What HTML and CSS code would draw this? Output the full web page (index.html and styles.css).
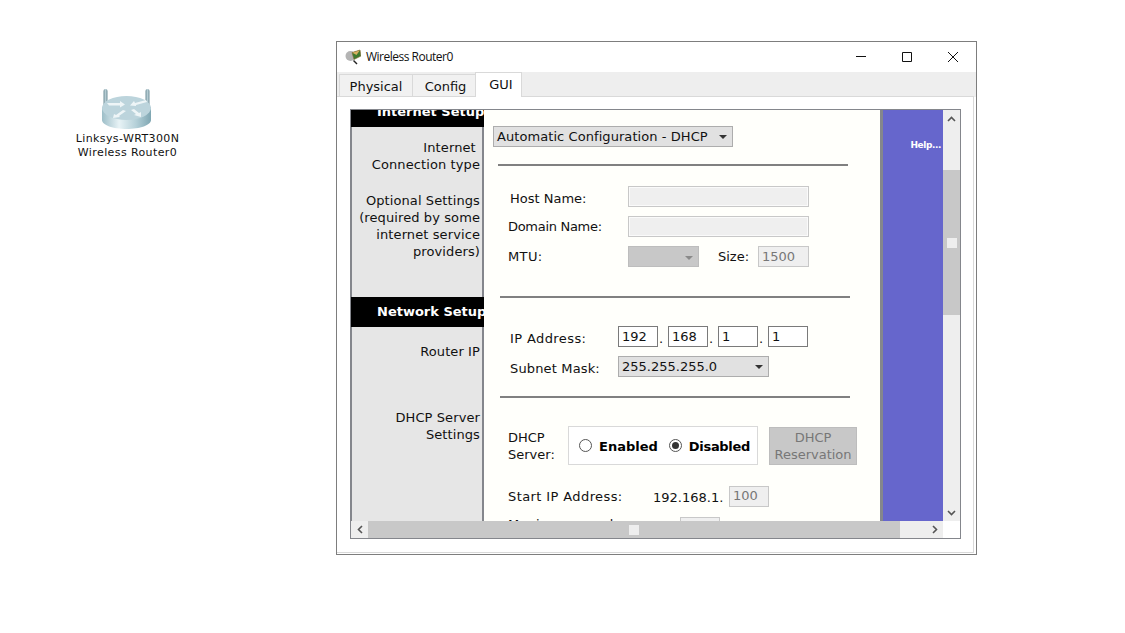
FILE: index.html
```html
<!DOCTYPE html>
<html lang="en">
<head>
<meta charset="utf-8">
<title>Wireless Router0</title>
<link rel="stylesheet" href="styles.css">
</head>
<body>
<main class="desktop">
  <div class="device">
    <svg class="device-icon" width="50" height="44" viewBox="0 0 50 44">
      <defs>
        <linearGradient id="body" x1="0" x2="1" y1="0" y2="0">
          <stop offset="0" stop-color="#9dbec8"/><stop offset=".35" stop-color="#e8f3f6"/><stop offset=".7" stop-color="#b4d0d8"/><stop offset="1" stop-color="#7fa6b2"/>
        </linearGradient>
        <linearGradient id="ant" x1="0" x2="1" y1="0" y2="0">
          <stop offset="0" stop-color="#6f8f99"/><stop offset=".5" stop-color="#b5cbd2"/><stop offset="1" stop-color="#6f8f99"/>
        </linearGradient>
      </defs>
      <rect x="2.500" y="2" width="4" height="22" rx="2" fill="url(#ant)"/>
      <rect x="44.500" y="2" width="4" height="22" rx="2" fill="url(#ant)"/>
      <path d="M1 20v13c0 5 11 9 24.500 9S50 38 50 33V20z" fill="url(#body)"/>
      <ellipse cx="25.500" cy="21" rx="24.500" ry="12" fill="#bcd4dc"/>
      <path d="M6 16l13 0 0-2 5 3.500-5 3 0-2-11 0zM45 13l-11 3-1-2-4 4.500 6 .5 0-1 11-3zM22 23l-7 5-2-1-1 4 7-1-1-1 7-5zM30 23l5 4-2 1 7 2 0-5-2 1-5-4z" fill="#eef5f7"/>
    </svg>
    <div class="device-label">Linksys-WRT300N<br>Wireless Router0</div>
  </div>

  <section class="window">
    <header class="titlebar">
      <svg class="app-icon" width="16" height="16" viewBox="0 0 16 16">
        <circle cx="5.500" cy="7" r="5" fill="#b4b4b4"/>
        <path d="M7 3.500l8-2.500 1 6-7 3.500z" fill="#3f7a2e"/>
        <path d="M7 3.500l8-2.500-3.500 5z" fill="#d9b060"/>
        <path d="M7 3.500l8-2.500 1 6-7 3.500z" fill="none" stroke="#8a6a34" stroke-width=".6"/>
        <path d="M8.500 11.500l3.500 3.500" stroke="#222" stroke-width="1.400"/>
      </svg>
      <span class="title">Wireless Router0</span>
      <div class="controls">
        <svg width="12" height="12" viewBox="0 0 12 12"><path d="M1 5.500h10" stroke="#111" fill="none"/></svg>
        <svg width="12" height="12" viewBox="0 0 12 12"><path d="M1.500 1.500h9v9h-9z" stroke="#111" fill="none"/></svg>
        <svg width="12" height="12" viewBox="0 0 12 12"><path d="M1 1l10 10M11 1L1 11" stroke="#111" fill="none"/></svg>
      </div>
    </header>
    <nav class="tabs">
      <span class="tab tab-physical">Physical</span>
      <span class="tab tab-config">Config</span>
      <span class="tab tab-active">GUI</span>
    </nav>
    <div class="panel">
      <div class="frame">
        <div class="view">
          <div class="page">
            <aside class="side">
              <div class="side-head">Internet Setup</div>
              <p class="side-text side-conn">Internet&nbsp;<br>Connection type</p>
              <p class="side-text side-opt">Optional Settings<br>(required by some<br>internet service<br>providers)</p>
              <div class="side-head side-net">Network Setup</div>
              <p class="side-text side-router">Router IP</p>
              <p class="side-text side-dhcp">DHCP Server<br>Settings</p>
            </aside>
            <div class="content">
              <div class="select select-conn">Automatic Configuration - DHCP<i class="caret"></i></div>
              <hr class="rule rule-1">
              <div class="row row-host"><label class="lab lab-host">Host Name:</label><span class="field field-wide"></span></div>
              <div class="row row-domain"><label class="lab lab-domain">Domain Name:</label><span class="field field-wide"></span></div>
              <div class="row row-mtu"><label class="lab lab-mtu">MTU:</label><span class="select-off"><i class="caret caret-off"></i></span><label class="lab-size">Size:</label><span class="field field-size">1500</span></div>
              <hr class="rule rule-2">
              <div class="row row-ip"><label class="lab lab-ip">IP Address:</label><span class="octet">192</span><b class="dot">.</b><span class="octet">168</span><b class="dot">.</b><span class="octet">1</span><b class="dot">.</b><span class="octet">1</span></div>
              <div class="row row-mask"><label class="lab lab-mask">Subnet Mask:</label><div class="select select-mask">255.255.255.0<i class="caret"></i></div></div>
              <hr class="rule rule-3">
              <div class="row row-dhcp">
                <label class="lab-dhcp">DHCP<br>Server:</label>
                <div class="radio-box">
                  <span class="radio"></span><strong class="radio-text">Enabled</strong>
                  <span class="radio radio-on"></span><strong class="radio-text radio-text-tight">Disabled</strong>
                </div>
                <div class="btn-off">DHCP<br>Reservation</div>
              </div>
              <div class="row row-start"><label class="lab lab-start">Start IP Address:</label><span class="prefix">192.168.1.</span><span class="field field-start">100</span></div>
              <div class="row row-max"><label class="lab lab-max">Maximum number</label><span class="field field-max"></span></div>
            </div>
            <div class="help"><span class="help-text">Help...</span></div>
          </div>
          <div class="vbar">
            <svg class="arrow" width="9" height="6" viewBox="0 0 9 6"><path d="M1 5l3.500-3.500L8 5" stroke="#555" stroke-width="1.600" fill="none"/></svg>
            <div class="vthumb"><i class="grip"></i></div>
            <svg class="arrow arrow-down" width="9" height="6" viewBox="0 0 9 6"><path d="M1 1l3.500 3.500L8 1" stroke="#555" stroke-width="1.600" fill="none"/></svg>
          </div>
        </div>
        <div class="hbar">
          <div class="hbtn"><svg width="6" height="9" viewBox="0 0 6 9"><path d="M5 1L1.500 4.500 5 8" stroke="#555" stroke-width="1.600" fill="none"/></svg></div>
          <div class="hthumb"><i class="grip"></i></div>
          <div class="htrack"><svg width="6" height="9" viewBox="0 0 6 9"><path d="M1 1l3.500 3.500L1 8" stroke="#555" stroke-width="1.600" fill="none"/></svg></div>
          <div class="corner"></div>
        </div>
      </div>
    </div>
  </section>
</main>
</body>
</html>
```

FILE: styles.css
```css
* { box-sizing: border-box; }
html, body { margin: 0; padding: 0; background: #fff; }
body { font: 13px/17px "DejaVu Sans", Verdana, sans-serif; color: #111; }
.desktop { position: relative; width: 1125px; height: 633px; overflow: hidden; background: #fff; }

.device { position: absolute; left: 62px; top: 87px; width: 131px; text-align: center; }
.device-icon { display: block; margin: 0 0 0 39px; height: 44px; width: 50px; }
.device-label { font-size: 11px; line-height: 14px; letter-spacing: .4px; margin-top: 1px; }

.window { position: absolute; left: 336px; top: 41px; width: 641px; height: 514px; border: 1px solid #7d7d7d; background: #fff; display: flex; flex-direction: column; }
.titlebar { height: 30px; display: flex; align-items: center; padding-left: 8px; flex: none; }
.app-icon { margin-right: 5px; }
.title { font: 12px/16px "Open Sans", "Noto Sans", sans-serif; letter-spacing: -.5px; color: #111; }
.controls { margin-left: auto; display: flex; gap: 34px; padding-right: 17px; margin-top: -1px; }
.controls svg { display: block; }

.tabs { height: 25px; background: #eee; flex: none; display: flex; align-items: flex-end; padding-left: 2px; }
.tab { display: block; height: 23px; line-height: 23px; text-align: center; background: #f1f1f1; border: 1px solid #d9d9d9; border-bottom: 0; }
.tab-physical { width: 74px; }
.tab-config { width: 63px; border-left: 0; padding-left: 3px; }
.tab-active { width: 47px; height: 25px; line-height: 24px; background: #fff; margin-left: -1px; padding-left: 5px; position: relative; z-index: 1; }

.panel { flex: 1; min-height: 0; border: 1px solid #d9d9d9; margin: -1px 2px 1px 0; padding: 12px 12px 14px 13px; border-left: 0; }
.frame { width: 611px; height: 430px; border: 1px solid #84868c; display: flex; flex-direction: column; }
.view { flex: 1; min-height: 0; display: flex; overflow: hidden; }
.page { flex: 1; display: flex; overflow: hidden; height: 411px; }

.side { width: 133px; flex: none; background: #e6e6e6; border-left: 1px solid #84868c; border-right: 2px solid #84868c; margin-top: -13px; text-align: right; height: 600px; }
.side-head { height: 30px; margin-left: -1px; margin-right: -2px; background: #000; color: #fff; font-weight: 700; line-height: 30px; padding-left: 26px; text-align: left; white-space: nowrap; }
.side-text { margin: 0; padding-right: 2px; letter-spacing: .1px; }
.side-conn { margin-top: 12px; }
.side-opt { margin-top: 19px; }
.side-net { margin-top: 37px; }
.side-router { margin-top: 16px; }
.side-dhcp { margin-top: 49px; }

.content { width: 399px; flex: none; background: #fffffb; border-right: 3px solid #84868c; height: 411px; overflow: hidden; padding-top: 16px; }
.select { height: 21px; background: #e1e1e1; border: 1px solid #adadad; line-height: 19px; padding-left: 3px; position: relative; white-space: nowrap; }
.select-conn { width: 240px; margin-left: 9px; letter-spacing: .07px; }
.select-mask { width: 151px; }
.caret { position: absolute; right: 5px; top: 8px; width: 0; height: 0; border: 4px solid transparent; border-top-color: #333; border-bottom: 0; }
.caret-off { border-top-color: #8a8a8a; right: 5px; top: 9px; }

.rule { height: 2px; border: 0; margin: 0; width: 350px; background: #808080; }
.rule-1 { margin: 17px 0 0 14px; }
.rule-2 { margin: 29px 0 0 16px; }
.rule-3 { margin: 19px 0 0 16px; }

.row { display: flex; align-items: center; height: 21px; white-space: nowrap; }
.row-host { margin-top: 20px; }
.row-domain { margin-top: 9px; }
.row-mtu { margin-top: 9px; }
.row-ip { margin-top: 28px; }
.row-mask { margin-top: 9px; }
.row-dhcp { margin-top: 28px; height: 39px; padding-left: 24px; }
.row-start { margin-top: 21px; }
.row-max { margin-top: 10px; }

.lab { display: block; flex: none; }
.lab-host { width: 118px; margin-left: 26px; padding-top: 3px; }
.lab-domain { width: 120px; margin-left: 24px; letter-spacing: -.3px; }
.lab-mtu { width: 120px; margin-left: 24px; letter-spacing: .4px; }
.lab-ip { width: 108px; margin-left: 26px; padding-top: 3px; letter-spacing: .4px; }
.lab-mask { width: 108px; margin-left: 26px; padding-top: 3px; letter-spacing: .15px; }
.lab-size { margin-left: 19px; width: 40px; margin-top: -1px; }
.lab-start { width: 145px; margin-left: 24px; margin-top: -1px; letter-spacing: .4px; }
.lab-max { width: 172px; margin-left: 24px; margin-top: -6px; letter-spacing: .4px; }

.field { display: block; flex: none; height: 21px; background: #efefef; border: 1px solid #c8c8c8; color: #777; padding-left: 3px; line-height: 19px; }
.field-wide { width: 181px; box-shadow: inset 0 0 0 1px #fafafa; }
.field-size { width: 51px; }
.field-start { width: 40px; line-height: 17px; }
.field-max { width: 40px; }
.select-off { display: block; flex: none; position: relative; width: 71px; height: 21px; background: #c8c8c8; border: 1px solid #bdbdbd; }

.octet { display: block; flex: none; width: 40px; height: 21px; border: 1px solid #7a7a7a; background: #fff; padding-left: 3px; line-height: 19px; }
.dot { width: 10px; font-weight: 400; text-align: left; padding: 3px 0 0 1px; }

.lab-dhcp { width: 60px; flex: none; }
.radio-box { width: 190px; height: 39px; flex: none; background: #fff; border: 1px solid #d9d9d9; display: flex; align-items: center; padding-left: 10px; margin-right: 11px; }
.radio { display: block; flex: none; width: 13px; height: 13px; border: 1px solid #555; border-radius: 50%; background: #fff; margin-right: 7px; position: relative; }
.radio-on::after { content: ""; position: absolute; left: 2px; top: 2px; width: 7px; height: 7px; border-radius: 50%; background: #333; }
.radio-text { margin-right: 11px; margin-top: 1px; font-weight: 700; color: #000; }
.radio-text-tight { letter-spacing: -.3px; margin-right: 0; }
.btn-off { width: 88px; height: 38px; flex: none; background: #c8c8c8; border: 1px solid #bdbdbd; color: #777; text-align: center; line-height: 17px; padding-top: 1px; margin-top: 1px; }
.prefix { width: 76px; padding-top: 1px; flex: none; }

.help { width: 60px; flex: none; background: #6666cc; color: #fff; font-weight: 700; font-size: 9px; letter-spacing: -.4px; line-height: 14px; text-align: right; padding: 28px 2px 0 0; height: 411px; }
.help-text { display: block; }

.vbar { width: 17px; flex: none; background: #eee; display: flex; flex-direction: column; align-items: center; height: 411px; }
.arrow { display: block; margin-top: 6px; flex: none; }
.vthumb { width: 100%; height: 145px; background: #c8c8c8; margin-top: 48px; display: flex; align-items: center; justify-content: center; }
.arrow-down { margin-top: auto; margin-bottom: 5px; }
.grip { display: block; width: 10px; height: 10px; background: #eee; }

.hbar { height: 17px; display: flex; flex: none; background: #eee; }
.hbtn { width: 17px; display: flex; align-items: center; justify-content: center; }
.hthumb { width: 532px; background: #c8c8c8; display: flex; align-items: center; justify-content: center; }
.htrack { width: 43px; display: flex; align-items: center; justify-content: flex-end; padding-right: 5px; }
.corner { width: 17px; background: #fff; }
```
